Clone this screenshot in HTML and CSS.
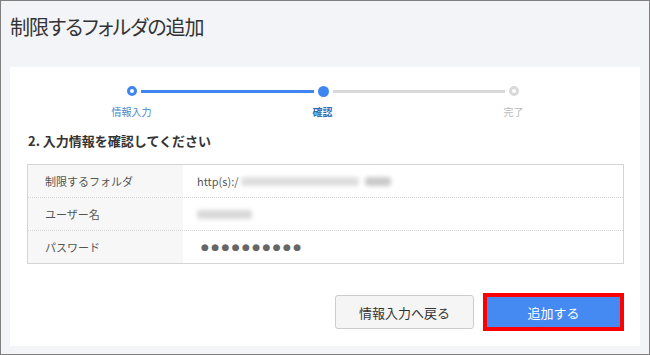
FILE: index.html
```html
<!DOCTYPE html>
<html lang="ja">
<head>
<meta charset="UTF-8" />
<title>制限するフォルダの追加</title>
<link rel="stylesheet" href="styles.css">
</head>
<body>
  <div class="frame">
    <h1 class="title">制限するフォルダの追加</h1>

    <div class="card">
      <!-- Step indicator -->
      <div class="step-track">
        <span class="dot dot-done"></span>
        <span class="line line-on"></span>
        <span class="dot dot-current"></span>
        <span class="line"></span>
        <span class="dot dot-todo"></span>
      </div>
      <div class="step-labels">
        <span class="step-label done">情報入力</span>
        <span class="step-label current">確認</span>
        <span class="step-label todo">完了</span>
      </div>

      <h2 class="section-title">2. 入力情報を確認してください</h2>

      <div class="info-table">
        <div class="info-row">
          <div class="info-key">制限するフォルダ</div>
          <div class="info-value">http(s):/<span class="blur blur-long"></span><span class="blur blur-dark"></span></div>
        </div>
        <div class="info-row">
          <div class="info-key">ユーザー名</div>
          <div class="info-value"><span class="blur blur-user"></span></div>
        </div>
        <div class="info-row">
          <div class="info-key">パスワード</div>
          <div class="info-value password">●●●●●●●●●●</div>
        </div>
      </div>

      <div class="actions">
        <button class="btn btn-back">情報入力へ戻る</button>
        <span class="highlight">
          <button class="btn btn-primary">追加する</button>
        </span>
      </div>
    </div>
  </div>
</body>
</html>
```

FILE: styles.css
```css
body {
  margin: 0;
  font-family: "Noto Sans CJK JP", sans-serif;
  color: #333;
}

.frame {
  box-sizing: border-box;
  width: 650px;
  height: 355px;
  border: 1px solid #7f7f7f;
  background: #f3f4f7;
  display: flex;
  flex-direction: column;
}

.title {
  margin: 0;
  padding: 12px 0 0 9px;
  height: 66px;
  box-sizing: border-box;
  flex: none;
  font-size: 20px;
  line-height: 28px;
  font-weight: normal;
  font-feature-settings: "palt";
  letter-spacing: -1px;
  color: #333;
}

.card {
  flex: 1;
  margin: 0 9px 8px;
  padding: 19px 16px 15px 17px;
  background: #fff;
  display: flex;
  flex-direction: column;
}

/* stepper */
.step-track {
  display: flex;
  align-items: center;
  gap: 4px;
  width: 392px;
  margin-left: 100px;
  height: 10px;
}
.dot {
  box-sizing: border-box;
  width: 10px;
  height: 10px;
  border-radius: 50%;
  flex: none;
}
.dot-done {
  border: 3px solid #3f86f0;
  background: #fff;
}
.dot-current {
  width: 11px;
  height: 11px;
  background: #3f86f0;
}
.dot-todo {
  border: 3px solid #d9d9d9;
  background: #fff;
}
.line {
  flex: 1;
  height: 3px;
  background: #d9d9d9;
}
.line-on {
  background: #3f86f0;
}

.step-labels {
  display: grid;
  grid-template-columns: repeat(3, 191px);
  margin: 9px 0 0 9px;
  font-size: 10px;
  line-height: 14px;
  text-align: center;
}
.step-label.done {
  color: #4a88cf;
}
.step-label.current {
  color: #2c6db5;
  font-weight: bold;
}
.step-label.todo {
  color: #bbb;
}

.section-title {
  margin: 13px 0 0 1px;
  font-size: 13px;
  line-height: 18px;
  font-weight: bold;
  color: #333;
}

/* confirmation table */
.info-table {
  margin-top: 14px;
  border: 1px solid #d4d4d4;
}
.info-row {
  display: flex;
  height: 32px;
}
.info-row + .info-row {
  border-top: 1px dotted #d4d4d4;
}
.info-key {
  width: 155px;
  padding-left: 17px;
  box-sizing: border-box;
  background: #f7f7f7;
  font-size: 11px;
  color: #555;
  display: flex;
  align-items: center;
}
.info-value {
  flex: 1;
  padding-left: 14px;
  font-size: 11px;
  color: #555;
  display: flex;
  align-items: center;
}
.info-value.password {
  font-family: "DejaVu Sans", sans-serif;
  font-size: 9px;
  letter-spacing: 2.4px;
  color: #666;
  padding-left: 18px;
}

.blur {
  display: inline-block;
  height: 9px;
  border-radius: 3px;
  background: #dedede;
  filter: blur(2px);
}
.blur-long {
  width: 118px;
  margin-left: 2px;
}
.blur-dark {
  width: 26px;
  margin-left: 6px;
  background: #cacaca;
}
.blur-user {
  width: 55px;
  background: #d8d8d8;
}

/* buttons */
.actions {
  margin-top: auto;
  display: flex;
  justify-content: flex-end;
  align-items: center;
  gap: 9px;
}
.btn {
  font-family: inherit;
  font-size: 13px;
  border-radius: 3px;
  cursor: pointer;
}
.btn-back {
  width: 139px;
  height: 34px;
  background: #f5f5f5;
  border: 1px solid #cccccc;
  color: #333;
}
.highlight {
  display: flex;
  border: 4px solid #ff0000;
}
.btn-primary {
  width: 133px;
  height: 30px;
  border: none;
  border-radius: 0;
  background: #4589f2;
  color: #fff;
}
```
